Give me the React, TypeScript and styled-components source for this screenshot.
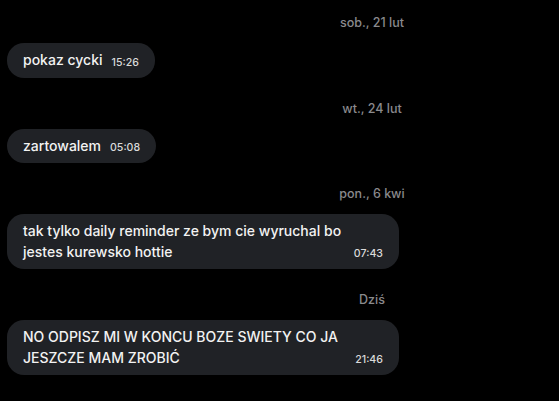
import React from "react";
import styled, { createGlobalStyle } from "styled-components";

const GlobalStyle = createGlobalStyle`
  html, body {
    margin: 0;
    padding: 0;
    background: #000;
  }
  body {
    font-family: Inter, "Noto Sans", "Liberation Sans", sans-serif;
    -webkit-font-smoothing: antialiased;
  }
`;

const Page = styled.div`
  width: 559px;
  height: 401px;
  overflow: hidden;
  background: #000;
  box-sizing: border-box;
  padding: 15px 0 0 7px;
  display: flex;
  flex-direction: column;
  gap: 23px;
`;

const Section = styled.section`
  display: flex;
  flex-direction: column;
  align-items: flex-start;
  gap: 13px;
`;

const DateLabel = styled.div`
  align-self: stretch;
  box-sizing: border-box;
  padding-left: 178px;
  text-align: center;
  font-size: 12.5px;
  line-height: 15px;
  color: #8a8a8d;
  font-weight: 500;
`;

const Bubble = styled.div`
  display: inline-flex;
  align-items: flex-end;
  gap: 9px;
  box-sizing: border-box;
  max-width: 392px;
  padding: 7px 16px;
  border-radius: 17px;
  background: #202226;
`;

const Text = styled.span`
  font-size: 14px;
  line-height: 20.5px;
  color: #f2f2f2;
  font-weight: 500;
`;

const Time = styled.span`
  flex-shrink: 0;
  font-size: 10.6px;
  line-height: 16px;
  color: #dadada;
  font-weight: 500;
`;

const messages = [
  { date: "sob., 21 lut", text: "pokaz cycki", time: "15:26" },
  { date: "wt., 24 lut", text: "zartowalem", time: "05:08" },
  {
    date: "pon., 6 kwi",
    text: "tak tylko daily reminder ze bym cie wyruchal bo jestes kurewsko hottie",
    time: "07:43",
  },
  {
    date: "Dziś",
    text: "NO ODPISZ MI W KONCU BOZE SWIETY CO JA JESZCZE MAM ZROBIĆ",
    time: "21:46",
  },
];

export default function App() {
  return (
    <>
      <GlobalStyle />
      <Page>
        {messages.map((m) => (
          <Section key={m.date}>
            <DateLabel>{m.date}</DateLabel>
            <Bubble>
              <Text>{m.text}</Text>
              <Time>{m.time}</Time>
            </Bubble>
          </Section>
        ))}
      </Page>
    </>
  );
}
